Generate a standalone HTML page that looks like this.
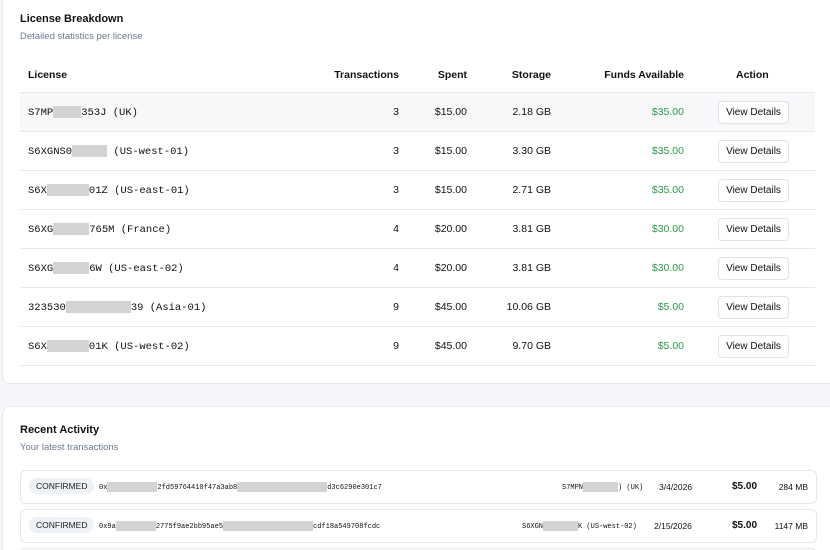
<!DOCTYPE html><html><head><style>
html,body{margin:0;width:830px;height:550px;overflow:hidden}
body{background:#f4f6f9;font-family:"Liberation Sans",sans-serif;color:#111;position:relative}
.card{position:absolute;left:2px;width:840px;background:#fff;border:1px solid #e6e9ee;border-radius:8px}
h3{position:absolute;margin:0;font-size:11px;font-weight:bold;left:17px}
.sub{position:absolute;left:17px;font-size:9.5px;color:#6b7a8c}
.mono{font-family:"Liberation Mono",monospace;font-size:8.6px}
.row{position:absolute;left:17px;width:795px;height:38px;border-bottom:1px solid #e5e8ee}
.row span{position:absolute;top:13px;font-size:10.5px}
.g{color:#2e9a4c}
.btn{position:absolute;left:698px;top:8px;width:69px;height:21px;border:1px solid #dfe3e8;border-radius:4px;font-size:10px;text-align:center;line-height:21px;background:#fff}
.bl{display:inline-block;background:#d3d3d5;height:12px;vertical-align:middle}
.act{position:absolute;left:17px;width:795px;height:32px;border:1px solid #e3e7ec;border-radius:6px;background:#fff}
.act span{position:absolute;top:11px;font-size:8.5px}
.badge{left:8px;top:7px!important;background:#eef1f5;border-radius:8px;padding:3px 7px;font-size:8.5px!important;color:#222}
</style></head><body>
<div class="card" style="top:-8px;height:390px">
<h3 style="top:20px">License Breakdown</h3>
<div class="sub" style="top:38px">Detailed statistics per license</div>
<div style="position:absolute;left:17px;top:66px;width:795px;height:33px;border-bottom:1px solid #e5e8ee;font-size:10.5px;font-weight:bold">
<span style="position:absolute;left:8px;top:10px">License</span>
<span style="position:absolute;right:416px;top:10px">Transactions</span>
<span style="position:absolute;right:348px;top:10px">Spent</span>
<span style="position:absolute;right:264px;top:10px">Storage</span>
<span style="position:absolute;right:131px;top:10px">Funds Available</span>
<span style="position:absolute;left:716px;top:10px">Action</span>
</div>
<div id="rows"></div>
</div>
<div class="card" style="top:406px;height:160px">
<h3 style="top:17px">Recent Activity</h3>
<div class="sub" style="top:35px">Your latest transactions</div>
<div class="act" style="top:63px"><span class="badge">CONFIRMED</span><span class="mono" style="left:78px;font-size:7px">0x<i class="bl" style="width:50px;height:10px"></i>2fd59764410f47a3ab8<i class="bl" style="width:90px;height:10px"></i>d3c6290e301c7</span><span class="mono" style="left:541px;font-size:7px">S7MPN<i class="bl" style="width:35px;height:10px"></i>) (UK)</span><span style="left:638px">3/4/2026</span><span style="left:711px;font-size:10px;font-weight:bold;top:10px">$5.00</span><span style="right:8px">284 MB</span></div>
<div class="act" style="top:102px"><span class="badge">CONFIRMED</span><span class="mono" style="left:78px;font-size:7px">0x9a<i class="bl" style="width:40px;height:10px"></i>2775f9ae2bb95ae5<i class="bl" style="width:90px;height:10px"></i>cdf18a549708fcdc</span><span class="mono" style="left:501px;font-size:7px">S6XGN<i class="bl" style="width:35px;height:10px"></i>K (US-west-02)</span><span style="left:633px">2/15/2026</span><span style="left:711px;font-size:10px;font-weight:bold;top:10px">$5.00</span><span style="right:8px">1147 MB</span></div>
<div class="act" style="top:141px"></div>
</div>
<script>
var d=[["S7MP","28","353J (UK)","3","$15.00","2.18 GB","$35.00"],["S6XGNS0","35"," (US-west-01)","3","$15.00","3.30 GB","$35.00"],["S6X","42","01Z (US-east-01)","3","$15.00","2.71 GB","$35.00"],["S6XG","36","765M (France)","4","$20.00","3.81 GB","$30.00"],["S6XG","36","6W (US-east-02)","4","$20.00","3.81 GB","$30.00"],["323530","65","39 (Asia-01)","9","$45.00","10.06 GB","$5.00"],["S6X","42","01K (US-west-02)","9","$45.00","9.70 GB","$5.00"]];
var h="";d.forEach(function(r,i){h+='<div class="row" style="top:'+(100+39*i)+'px;'+(i==0?'background:#f6f8fa':'')+'"><span class="mono" style="left:8px;top:13px">'+r[0]+'<i class="bl" style="width:'+r[1]+'px"></i>'+r[2]+'</span><span style="right:416px">'+r[3]+'</span><span style="right:348px">'+r[4]+'</span><span style="right:264px">'+r[5]+'</span><span class="g" style="right:131px">'+r[6]+'</span><div class="btn">View Details</div></div>'});
document.getElementById("rows").innerHTML=h;
</script>
</body></html>
